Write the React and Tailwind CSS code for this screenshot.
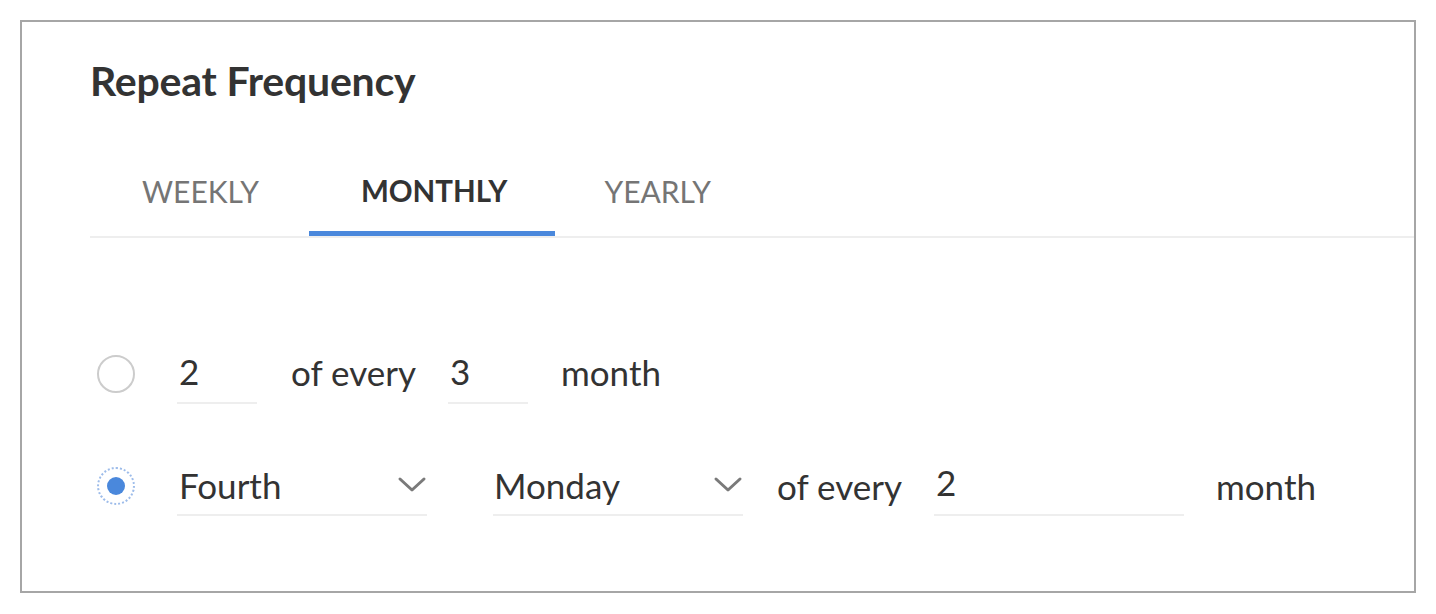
import React from "react";

function Chevron() {
  return (
    <svg width="30" height="18" viewBox="0 0 30 18" className="shrink-0">
      <path d="M3 3 L15 14 L27 3" fill="none" stroke="#7a7a7a" strokeWidth="3" strokeLinecap="round" strokeLinejoin="round" />
    </svg>
  );
}

export default function App() {
  return (
    <div className="w-[1436px] h-[614px] bg-white pt-[20px] pl-[20px]" style={{ fontFamily: "Lato, 'Noto Sans', sans-serif" }}>
      <div className="w-[1396px] h-[573px] border-2 border-[#a6a6a6] pl-[68px]">
        <h1 className="text-[41px] font-bold text-[#333333] mt-[35px] leading-[48px] tracking-[-0.2px]">Repeat Frequency</h1>
        <div className="mt-[64px] flex border-b-2 border-[#eeeeee]">
          <div className="px-[52px] h-[67px] pt-[4px] leading-[36px] text-[30px] text-[#757575] border-b-[5px] border-transparent">WEEKLY</div>
          <div className="pl-[52px] pr-[48px] h-[67px] pt-[4px] leading-[36px] text-[29.5px] font-bold text-[#333333] border-b-[5px] border-[#4a88dc] -ml-[2px]">MONTHLY</div>
          <div className="pl-[49px] pr-[50px] h-[67px] pt-[4px] leading-[36px] text-[30px] text-[#757575] border-b-[5px] border-transparent">YEARLY</div>
        </div>
        <div className="mt-[106px] flex items-center h-[60px]">
          <div className="w-[38px] h-[38px] rounded-full border-2 border-[#cccccc] ml-[7px]"></div>
          <div className="ml-[42px] w-[80px] h-[60px] border-b-2 border-[#eeeeee] flex items-center pl-[2px] pb-[4px] text-[35px] text-[#333333]">2</div>
          <div className="ml-[34px] pb-[4px] text-[35px] text-[#333333]">of every</div>
          <div className="ml-[32px] w-[80px] h-[60px] border-b-2 border-[#eeeeee] flex items-center pl-[2px] pb-[4px] text-[35px] text-[#333333]">3</div>
          <div className="ml-[33px] pb-[4px] text-[35px] text-[#333333]">month</div>
        </div>
        <div className="mt-[52px] flex items-center h-[60px]">
          <div className="w-[38px] h-[38px] rounded-full border-2 border-dotted border-[#9dbcea] ml-[7px] flex items-center justify-center">
            <div className="w-[18px] h-[18px] rounded-full bg-[#4a88dc]"></div>
          </div>
          <div className="ml-[42px] w-[250px] h-[60px] border-b-2 border-[#eeeeee] flex items-center justify-between pl-[2px] text-[35px] text-[#333333]">
            <span>Fourth</span>
            <Chevron />
          </div>
          <div className="ml-[66px] w-[250px] h-[60px] border-b-2 border-[#eeeeee] flex items-center justify-between pl-[1px] text-[35px] text-[#333333]">
            <span>Monday</span>
            <Chevron />
          </div>
          <div className="ml-[34px] text-[35px] text-[#333333]">of every</div>
          <div className="ml-[32px] w-[250px] h-[60px] border-b-2 border-[#eeeeee] flex items-start pl-[2px] text-[35px] text-[#333333]">2</div>
          <div className="ml-[32px] text-[35px] text-[#333333]">month</div>
        </div>
      </div>
    </div>
  );
}
